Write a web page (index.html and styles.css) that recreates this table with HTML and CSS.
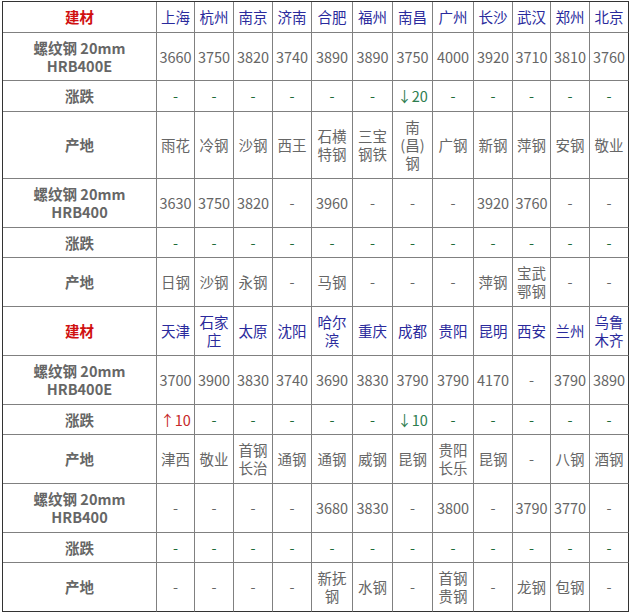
FILE: index.html
```html
<!DOCTYPE html>
<html lang="zh-CN">
<head>
<meta charset="utf-8">
<title>螺纹钢价格</title>
<link rel="stylesheet" href="styles.css">
</head>
<body>
<table class="price-table">
  <colgroup>
    <col class="c-label">
    <col class="c38"><col class="c39"><col class="c39"><col class="c39"><col class="c41"><col class="c40">
    <col class="c40"><col class="c41"><col class="c39"><col class="c38"><col class="c39"><col class="c39">
  </colgroup>
  <tbody>
    <tr class="head r31">
      <td class="label material">建材</td>
      <td>上海</td><td>杭州</td><td>南京</td><td>济南</td><td>合肥</td><td>福州</td>
      <td>南昌</td><td>广州</td><td>长沙</td><td>武汉</td><td>郑州</td><td>北京</td>
    </tr>
    <tr class="r48">
      <td class="label">螺纹钢 20mm<br>HRB400E</td>
      <td>3660</td><td>3750</td><td>3820</td><td>3740</td><td>3890</td><td>3890</td>
      <td>3750</td><td>4000</td><td>3920</td><td>3710</td><td>3810</td><td>3760</td>
    </tr>
    <tr class="change r31">
      <td class="label">涨跌</td>
      <td>-</td><td>-</td><td>-</td><td>-</td><td>-</td><td>-</td>
      <td class="down">↓20</td><td>-</td><td>-</td><td>-</td><td>-</td><td>-</td>
    </tr>
    <tr class="r67">
      <td class="label">产地</td>
      <td>雨花</td><td>冷钢</td><td>沙钢</td><td>西王</td><td>石横<br>特钢</td><td>三宝<br>钢铁</td>
      <td>南<br>(昌)<br>钢</td><td>广钢</td><td>新钢</td><td>萍钢</td><td>安钢</td><td>敬业</td>
    </tr>
    <tr class="r49">
      <td class="label">螺纹钢 20mm<br>HRB400</td>
      <td>3630</td><td>3750</td><td>3820</td><td>-</td><td>3960</td><td>-</td>
      <td>-</td><td>-</td><td>3920</td><td>3760</td><td>-</td><td>-</td>
    </tr>
    <tr class="change r30">
      <td class="label">涨跌</td>
      <td>-</td><td>-</td><td>-</td><td>-</td><td>-</td><td>-</td>
      <td>-</td><td>-</td><td>-</td><td>-</td><td>-</td><td>-</td>
    </tr>
    <tr class="r49">
      <td class="label">产地</td>
      <td>日钢</td><td>沙钢</td><td>永钢</td><td>-</td><td>马钢</td><td>-</td>
      <td>-</td><td>-</td><td>萍钢</td><td>宝武<br>鄂钢</td><td>-</td><td>-</td>
    </tr>
    <tr class="head r49">
      <td class="label material">建材</td>
      <td>天津</td><td>石家<br>庄</td><td>太原</td><td>沈阳</td><td>哈尔<br>滨</td><td>重庆</td>
      <td>成都</td><td>贵阳</td><td>昆明</td><td>西安</td><td>兰州</td><td>乌鲁<br>木齐</td>
    </tr>
    <tr class="r49">
      <td class="label">螺纹钢 20mm<br>HRB400E</td>
      <td>3700</td><td>3900</td><td>3830</td><td>3740</td><td>3690</td><td>3830</td>
      <td>3790</td><td>3790</td><td>4170</td><td>-</td><td>3790</td><td>3890</td>
    </tr>
    <tr class="change r30">
      <td class="label">涨跌</td>
      <td class="up">↑10</td><td>-</td><td>-</td><td>-</td><td>-</td><td>-</td>
      <td class="down">↓10</td><td>-</td><td>-</td><td>-</td><td>-</td><td>-</td>
    </tr>
    <tr class="r49">
      <td class="label">产地</td>
      <td>津西</td><td>敬业</td><td>首钢<br>长治</td><td>通钢</td><td>通钢</td><td>威钢</td>
      <td>昆钢</td><td>贵阳<br>长乐</td><td>昆钢</td><td>-</td><td>八钢</td><td>酒钢</td>
    </tr>
    <tr class="r49">
      <td class="label">螺纹钢 20mm<br>HRB400</td>
      <td>-</td><td>-</td><td>-</td><td>-</td><td>3680</td><td>3830</td>
      <td>-</td><td>3800</td><td>-</td><td>3790</td><td>3770</td><td>-</td>
    </tr>
    <tr class="change r30">
      <td class="label">涨跌</td>
      <td>-</td><td>-</td><td>-</td><td>-</td><td>-</td><td>-</td>
      <td>-</td><td>-</td><td>-</td><td>-</td><td>-</td><td>-</td>
    </tr>
    <tr class="r49">
      <td class="label">产地</td>
      <td>-</td><td>-</td><td>-</td><td>-</td><td>新抚<br>钢</td><td>水钢</td>
      <td>-</td><td>首钢<br>贵钢</td><td>-</td><td>龙钢</td><td>包钢</td><td>-</td>
    </tr>
  </tbody>
</table>
</body>
</html>
```

FILE: styles.css
```css
html, body {
  margin: 0;
  padding: 0;
  background: #ffffff;
}

body {
  font-family: "Noto Sans CJK SC", "Noto Sans", sans-serif;
  font-size: 14.5px;
  color: #666666;
}

.price-table {
  margin: 1px 0 0 2px;
  border-collapse: separate;
  border-spacing: 0;
  table-layout: fixed;
  width: 627px;
  border-top: 1px solid #333333;
  border-left: 1px solid #333333;
}

.c-label { width: 154px; }
.c38 { width: 38px; }
.c39 { width: 39px; }
.c40 { width: 40px; }
.c41 { width: 41px; }

.price-table tr.r30 { height: 30px; }
.price-table tr.r31 { height: 31px; }
.price-table tr.r48 { height: 48px; }
.price-table tr.r49 { height: 49px; }
.price-table tr.r67 { height: 67px; }

.price-table td {
  border-right: 1px solid #808080;
  border-bottom: 1px solid #808080;
  padding: 4px 0;
  line-height: 18px;
  text-align: center;
  vertical-align: middle;
  white-space: nowrap;
  overflow: hidden;
  color: #666666;
}

.price-table tr td:last-child {
  border-right-color: #333333;
}

.price-table tr:last-child td {
  border-bottom-color: #333333;
}

.price-table td.label {
  font-weight: bold;
  color: #666666;
}

.price-table tr.head td {
  color: #2a2a9c;
}

.price-table tr.head td.material {
  color: #d01010;
}

.price-table tr.change td {
  color: #1f6b3a;
}

.price-table tr.change td.label {
  color: #666666;
}

.price-table tr.change td.down {
  color: #2e7d4f;
}

.price-table tr.change td.up {
  color: #c62828;
}
```
